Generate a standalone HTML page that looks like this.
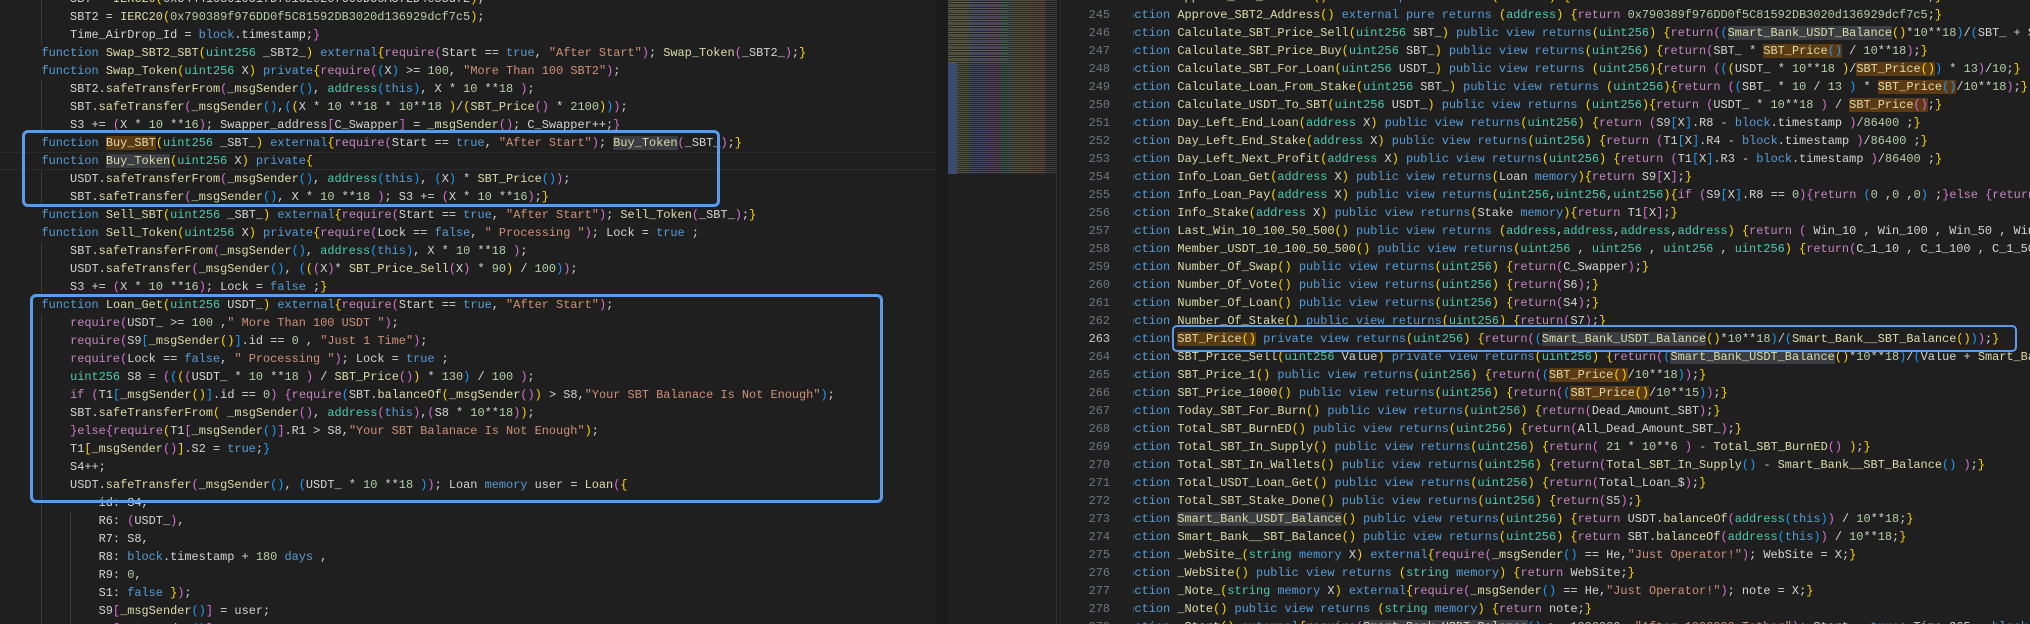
<!DOCTYPE html>
<html><head><meta charset="utf-8"><style>
html,body{margin:0;padding:0;background:#1f1f1f;width:2030px;height:624px;overflow:hidden;position:relative}
pre{margin:0;font-family:"Liberation Mono",monospace;font-size:11.92px;line-height:18px;color:#d4d4d4;position:absolute;white-space:pre}
.k{color:#569cd6}.f{color:#dcdcaa}.t{color:#4ec9b0}.c{color:#c586c0}.s{color:#ce9178}.n{color:#b5cea8}
.y{color:#ffd700}.m{color:#da70d6}.b{color:#179fff}
.h{background:#5c3a14}.g{background:#3a3d41}
#lp{position:absolute;left:0;top:0;width:936px;height:624px;overflow:hidden}
#rp{position:absolute;left:1133px;top:0;width:897px;height:624px;overflow:hidden}
.box{position:absolute;border:3px solid #5b9be8;border-radius:6px;box-sizing:border-box}
.guide{position:absolute;width:1px;background:#3c3c3c}
</style></head><body>
<div id="lp">
<div style="position:absolute;left:0;top:152px;width:936px;height:16px;border-top:1px solid #2c2c2c;border-bottom:1px solid #2c2c2c"></div>
<div class="guide" style="left:41px;top:-10px;height:54px"></div>
<div class="guide" style="left:41px;top:80px;height:54px"></div>
<div class="guide" style="left:41px;top:170px;height:36px"></div>
<div class="guide" style="left:41px;top:242px;height:54px"></div>
<div class="guide" style="left:41px;top:314px;height:310px"></div>
<div class="guide" style="left:70px;top:512px;height:112px"></div>
<pre style="left:12.9px;top:-10px">        SBT = <span class="f">IERC20</span><span class="y">(</span>0x5444103010517D7e152e207600D5cA572D4e53d72<span class="y">)</span>;
        SBT2 = <span class="f">IERC20</span><span class="y">(</span><span class="n">0x790389f976DD0f5C81592DB3020d136929dcf7c5</span><span class="y">)</span>;
        Time_AirDrop_Id = <span class="k">block</span>.timestamp;<span class="m">}</span>
    <span class="k">function</span> <span class="f">Swap_SBT2_SBT</span><span class="y">(</span><span class="t">uint256</span> _SBT2_<span class="y">)</span> <span class="k">external</span><span class="y">{</span><span class="c">require</span><span class="m">(</span>Start == <span class="k">true</span>, <span class="s">"After Start"</span><span class="m">)</span>; <span class="f">Swap_Token</span><span class="m">(</span>_SBT2_<span class="m">)</span>;<span class="y">}</span>
    <span class="k">function</span> <span class="f">Swap_Token</span><span class="y">(</span><span class="t">uint256</span> X<span class="y">)</span> <span class="k">private</span><span class="y">{</span><span class="c">require</span><span class="m">(</span><span class="b">(</span>X<span class="b">)</span> &gt;= <span class="n">100</span>, <span class="s">"More Than 100 SBT2"</span><span class="m">)</span>;
        SBT2.<span class="f">safeTransferFrom</span><span class="m">(</span><span class="f">_msgSender</span><span class="b">()</span>, <span class="t">address</span><span class="b">(</span><span class="k">this</span><span class="b">)</span>, X * <span class="n">10</span> **<span class="n">18</span> <span class="m">)</span>;
        SBT.<span class="f">safeTransfer</span><span class="m">(</span><span class="f">_msgSender</span><span class="b">()</span>,<span class="b">(</span><span class="y">(</span>X * <span class="n">10</span> **<span class="n">18</span> * <span class="n">10</span>**<span class="n">18</span> <span class="y">)</span>/<span class="y">(</span><span class="f">SBT_Price</span><span class="m">()</span> * <span class="n">2100</span><span class="y">)</span><span class="b">)</span><span class="m">)</span>;
        S3 += <span class="m">(</span>X * <span class="n">10</span> **<span class="n">16</span><span class="m">)</span>; Swapper_address<span class="m">[</span>C_Swapper<span class="m">]</span> = <span class="f">_msgSender</span><span class="m">()</span>; C_Swapper++;<span class="m">}</span>
    <span class="k">function</span> <span class="f h">Buy_SBT</span><span class="y">(</span><span class="t">uint256</span> _SBT_<span class="y">)</span> <span class="k">external</span><span class="y">{</span><span class="c">require</span><span class="m">(</span>Start == <span class="k">true</span>, <span class="s">"After Start"</span><span class="m">)</span>; <span class="f g">Buy_Token</span><span class="m">(</span>_SBT_<span class="m">)</span>;<span class="y">}</span>
    <span class="k">function</span> <span class="f g">Buy_Token</span><span class="y">(</span><span class="t">uint256</span> X<span class="y">)</span> <span class="k">private</span><span class="y">{</span>
        USDT.<span class="f">safeTransferFrom</span><span class="m">(</span><span class="f">_msgSender</span><span class="b">()</span>, <span class="t">address</span><span class="b">(</span><span class="k">this</span><span class="b">)</span>, <span class="b">(</span>X<span class="b">)</span> * <span class="f">SBT_Price</span><span class="b">()</span><span class="m">)</span>;
        SBT.<span class="f">safeTransfer</span><span class="m">(</span><span class="f">_msgSender</span><span class="b">()</span>, X * <span class="n">10</span> **<span class="n">18</span> <span class="m">)</span>; S3 += <span class="m">(</span>X * <span class="n">10</span> **<span class="n">16</span><span class="m">)</span>;<span class="y">}</span>
    <span class="k">function</span> <span class="f">Sell_SBT</span><span class="y">(</span><span class="t">uint256</span> _SBT_<span class="y">)</span> <span class="k">external</span><span class="y">{</span><span class="c">require</span><span class="m">(</span>Start == <span class="k">true</span>, <span class="s">"After Start"</span><span class="m">)</span>; <span class="f">Sell_Token</span><span class="m">(</span>_SBT_<span class="m">)</span>;<span class="y">}</span>
    <span class="k">function</span> <span class="f">Sell_Token</span><span class="y">(</span><span class="t">uint256</span> X<span class="y">)</span> <span class="k">private</span><span class="y">{</span><span class="c">require</span><span class="m">(</span>Lock == <span class="k">false</span>, <span class="s">" Processing "</span><span class="m">)</span>; Lock = <span class="k">true</span> ;
        SBT.<span class="f">safeTransferFrom</span><span class="m">(</span><span class="f">_msgSender</span><span class="b">()</span>, <span class="t">address</span><span class="b">(</span><span class="k">this</span><span class="b">)</span>, X * <span class="n">10</span> **<span class="n">18</span> <span class="m">)</span>;
        USDT.<span class="f">safeTransfer</span><span class="m">(</span><span class="f">_msgSender</span><span class="b">()</span>, <span class="b">(</span><span class="y">(</span><span class="m">(</span>X<span class="m">)</span>* <span class="f">SBT_Price_Sell</span><span class="m">(</span>X<span class="m">)</span> * <span class="n">90</span><span class="y">)</span> / <span class="n">100</span><span class="b">)</span><span class="m">)</span>;
        S3 += <span class="m">(</span>X * <span class="n">10</span> **<span class="n">16</span><span class="m">)</span>; Lock = <span class="k">false</span> ;<span class="y">}</span>
    <span class="k">function</span> <span class="f">Loan_Get</span><span class="y">(</span><span class="t">uint256</span> USDT_<span class="y">)</span> <span class="k">external</span><span class="y">{</span><span class="c">require</span><span class="m">(</span>Start == <span class="k">true</span>, <span class="s">"After Start"</span><span class="m">)</span>;
        <span class="c">require</span><span class="m">(</span>USDT_ &gt;= <span class="n">100</span> ,<span class="s">" More Than 100 USDT "</span><span class="m">)</span>;
        <span class="c">require</span><span class="m">(</span>S9<span class="b">[</span><span class="f">_msgSender</span><span class="y">()</span><span class="b">]</span>.id == <span class="n">0</span> , <span class="s">"Just 1 Time"</span><span class="m">)</span>;
        <span class="c">require</span><span class="m">(</span>Lock == <span class="k">false</span>, <span class="s">" Processing "</span><span class="m">)</span>; Lock = <span class="k">true</span> ;
        <span class="t">uint256</span> S8 = <span class="m">(</span><span class="b">(</span><span class="y">(</span><span class="m">(</span>USDT_ * <span class="n">10</span> **<span class="n">18</span> <span class="m">)</span> / <span class="f">SBT_Price</span><span class="m">()</span><span class="y">)</span> * <span class="n">130</span><span class="b">)</span> / <span class="n">100</span> <span class="m">)</span>;
        <span class="c">if</span> <span class="m">(</span>T1<span class="b">[</span><span class="f">_msgSender</span><span class="y">()</span><span class="b">]</span>.id == <span class="n">0</span><span class="m">)</span> <span class="m">{</span><span class="c">require</span><span class="b">(</span>SBT.<span class="f">balanceOf</span><span class="y">(</span><span class="f">_msgSender</span><span class="m">()</span><span class="y">)</span> &gt; S8,<span class="s">"Your SBT Balanace Is Not Enough"</span><span class="b">)</span>;
        SBT.<span class="f">safeTransferFrom</span><span class="y">(</span> <span class="f">_msgSender</span><span class="m">()</span>, <span class="t">address</span><span class="m">(</span><span class="k">this</span><span class="m">)</span>,<span class="m">(</span>S8 * <span class="n">10</span>**<span class="n">18</span><span class="m">)</span><span class="y">)</span>;
        <span class="m">}</span><span class="c">else</span><span class="m">{</span><span class="c">require</span><span class="y">(</span>T1<span class="m">[</span><span class="f">_msgSender</span><span class="b">()</span><span class="m">]</span>.R1 &gt; S8,<span class="s">"Your SBT Balanace Is Not Enough"</span><span class="y">)</span>;
        T1<span class="y">[</span><span class="f">_msgSender</span><span class="m">()</span><span class="y">]</span>.S2 = <span class="k">true</span>;<span class="b">}</span>
        S4++;
        USDT.<span class="f">safeTransfer</span><span class="m">(</span><span class="f">_msgSender</span><span class="b">()</span>, <span class="b">(</span>USDT_ * <span class="n">10</span> **<span class="n">18</span> <span class="b">)</span><span class="m">)</span>; Loan <span class="k">memory</span> user = <span class="f">Loan</span><span class="m">(</span><span class="y">{</span>
            id: S4,
            R6: <span class="m">(</span>USDT_<span class="m">)</span>,
            R7: S8,
            R8: <span class="k">block</span>.timestamp + <span class="n">180</span> <span class="k">days</span> ,
            R9: <span class="n">0</span>,
            S1: <span class="k">false</span> <span class="y">}</span><span class="m">)</span>;
            S9<span class="m">[</span><span class="f">_msgSender</span><span class="b">()</span><span class="m">]</span> = user;
            T1<span class="m">[</span><span class="f">_msgSender</span><span class="b">()</span><span class="m">]</span>.S2 = <span class="k">true</span>;</pre>
<div class="box" style="left:22px;top:130px;width:698px;height:77px"></div>
<div class="box" style="left:30px;top:294px;width:853px;height:209px"></div>
</div>
<div style="position:absolute;left:936px;top:0;width:12px;height:624px;background:#1b1b1b"></div>
<div style="position:absolute;left:948px;top:0;width:108px;height:174px;opacity:.55;background:
repeating-linear-gradient(0deg,rgba(0,0,0,.55) 0 1px,transparent 1px 2px),
linear-gradient(90deg,#7d7a55 0 20%,#5d6a9a 20% 35%,#7b5c86 35% 48%,#587f6e 48% 60%,#7d7a55 60% 75%,#8a6a55 75% 90%,#555 90%);"></div>
<div style="position:absolute;left:948px;top:0;width:60px;height:63px;opacity:.5;background:repeating-linear-gradient(0deg,#6b6a58 0 1px,transparent 1px 3px)"></div>
<div style="position:absolute;left:948px;top:63px;width:9px;height:111px;background:#3a4c6e"></div>
<div style="position:absolute;left:1056px;top:0;width:1px;height:624px;background:#333"></div>
<div style="position:absolute;left:1060px;top:0;width:1px;height:624px;background:#2a2a2a"></div>
<pre style="left:1060px;top:-12px;width:50px;text-align:right;color:#6e7681">244
245
246
247
248
249
250
251
252
253
254
255
256
257
258
259
260
261
262
<span style="color:#cccccc">263</span>
264
265
266
267
268
269
270
271
272
273
274
275
276
277
278
279</pre>
<div id="rp">
<pre style="left:-20px;top:-12px"><span class="k">function</span> <span class="f">Approve_SBT_Address</span><span class="y">()</span> <span class="k">external</span> <span class="k">pure</span> <span class="k">returns</span> <span class="y">(</span><span class="t">address</span><span class="y">)</span> <span class="y">{</span><span class="c">return</span> <span class="n">0x5444103010517D7e152e207600D5cA572D4e53d72</span>;<span class="y">}</span>
<span class="k">function</span> <span class="f">Approve_SBT2_Address</span><span class="y">()</span> <span class="k">external</span> <span class="k">pure</span> <span class="k">returns</span> <span class="y">(</span><span class="t">address</span><span class="y">)</span> <span class="y">{</span><span class="c">return</span> <span class="n">0x790389f976DD0f5C81592DB3020d136929dcf7c5</span>;<span class="y">}</span>
<span class="k">function</span> <span class="f">Calculate_SBT_Price_Sell</span><span class="y">(</span><span class="t">uint256</span> SBT_<span class="y">)</span> <span class="k">public</span> <span class="k">view</span> <span class="k">returns</span><span class="y">(</span><span class="t">uint256</span><span class="y">)</span> <span class="y">{</span><span class="c">return</span><span class="m">(</span><span class="b">(</span><span class="f g">Smart_Bank_USDT_Balance</span><span class="y">()</span>*<span class="n">10</span>**<span class="n">18</span><span class="b">)</span>/<span class="b">(</span>SBT_ + <span class="f">Smart_Bank__SBT_Balance</span><span class="y">()</span><span class="b">)</span><span class="m">)</span>;<span class="y">}</span>
<span class="k">function</span> <span class="f">Calculate_SBT_Price_Buy</span><span class="y">(</span><span class="t">uint256</span> SBT_<span class="y">)</span> <span class="k">public</span> <span class="k">view</span> <span class="k">returns</span><span class="y">(</span><span class="t">uint256</span><span class="y">)</span> <span class="y">{</span><span class="c">return</span><span class="m">(</span>SBT_ * <span class="f h">SBT_Price</span><span class="h"><span class="b">()</span></span> / <span class="n">10</span>**<span class="n">18</span><span class="m">)</span>;<span class="y">}</span>
<span class="k">function</span> <span class="f">Calculate_SBT_For_Loan</span><span class="y">(</span><span class="t">uint256</span> USDT_<span class="y">)</span> <span class="k">public</span> <span class="k">view</span> <span class="k">returns</span> <span class="y">(</span><span class="t">uint256</span><span class="y">)</span><span class="y">{</span><span class="c">return</span> <span class="m">(</span><span class="b">(</span><span class="y">(</span>USDT_ * <span class="n">10</span>**<span class="n">18</span> <span class="y">)</span>/<span class="f h">SBT_Price</span><span class="h"><span class="y">()</span></span><span class="b">)</span> * <span class="n">13</span><span class="m">)</span>/<span class="n">10</span>;<span class="y">}</span>
<span class="k">function</span> <span class="f">Calculate_Loan_From_Stake</span><span class="y">(</span><span class="t">uint256</span> SBT_<span class="y">)</span> <span class="k">public</span> <span class="k">view</span> <span class="k">returns</span> <span class="y">(</span><span class="t">uint256</span><span class="y">)</span><span class="y">{</span><span class="c">return</span> <span class="m">(</span><span class="b">(</span>SBT_ * <span class="n">10</span> / <span class="n">13</span> <span class="b">)</span> * <span class="f h">SBT_Price</span><span class="h"><span class="b">()</span></span>/<span class="n">10</span>**<span class="n">18</span><span class="m">)</span>;<span class="y">}</span>
<span class="k">function</span> <span class="f">Calculate_USDT_To_SBT</span><span class="y">(</span><span class="t">uint256</span> USDT_<span class="y">)</span> <span class="k">public</span> <span class="k">view</span> <span class="k">returns</span> <span class="y">(</span><span class="t">uint256</span><span class="y">)</span><span class="y">{</span><span class="c">return</span> <span class="m">(</span>USDT_ * <span class="n">10</span>**<span class="n">18</span> <span class="m">)</span> / <span class="f h">SBT_Price</span><span class="h"><span class="m">()</span></span>;<span class="y">}</span>
<span class="k">function</span> <span class="f">Day_Left_End_Loan</span><span class="y">(</span><span class="t">address</span> X<span class="y">)</span> <span class="k">public</span> <span class="k">view</span> <span class="k">returns</span><span class="y">(</span><span class="t">uint256</span><span class="y">)</span> <span class="y">{</span><span class="c">return</span> <span class="m">(</span>S9<span class="b">[</span>X<span class="b">]</span>.R8 - <span class="k">block</span>.timestamp <span class="m">)</span>/<span class="n">86400</span> ;<span class="y">}</span>
<span class="k">function</span> <span class="f">Day_Left_End_Stake</span><span class="y">(</span><span class="t">address</span> X<span class="y">)</span> <span class="k">public</span> <span class="k">view</span> <span class="k">returns</span><span class="y">(</span><span class="t">uint256</span><span class="y">)</span> <span class="y">{</span><span class="c">return</span> <span class="m">(</span>T1<span class="b">[</span>X<span class="b">]</span>.R4 - <span class="k">block</span>.timestamp <span class="m">)</span>/<span class="n">86400</span> ;<span class="y">}</span>
<span class="k">function</span> <span class="f">Day_Left_Next_Profit</span><span class="y">(</span><span class="t">address</span> X<span class="y">)</span> <span class="k">public</span> <span class="k">view</span> <span class="k">returns</span><span class="y">(</span><span class="t">uint256</span><span class="y">)</span> <span class="y">{</span><span class="c">return</span> <span class="m">(</span>T1<span class="b">[</span>X<span class="b">]</span>.R3 - <span class="k">block</span>.timestamp <span class="m">)</span>/<span class="n">86400</span> ;<span class="y">}</span>
<span class="k">function</span> <span class="f">Info_Loan_Get</span><span class="y">(</span><span class="t">address</span> X<span class="y">)</span> <span class="k">public</span> <span class="k">view</span> <span class="k">returns</span><span class="y">(</span>Loan <span class="k">memory</span><span class="y">)</span><span class="y">{</span><span class="c">return</span> S9<span class="m">[</span>X<span class="m">]</span>;<span class="y">}</span>
<span class="k">function</span> <span class="f">Info_Loan_Pay</span><span class="y">(</span><span class="t">address</span> X<span class="y">)</span> <span class="k">public</span> <span class="k">view</span> <span class="k">returns</span><span class="y">(</span><span class="t">uint256</span>,<span class="t">uint256</span>,<span class="t">uint256</span><span class="y">)</span><span class="y">{</span><span class="c">if</span> <span class="m">(</span>S9<span class="b">[</span>X<span class="b">]</span>.R8 == <span class="n">0</span><span class="m">)</span><span class="m">{</span><span class="c">return</span> <span class="b">(</span><span class="n">0</span> ,<span class="n">0</span> ,<span class="n">0</span><span class="b">)</span> ;<span class="m">}</span><span class="c">else</span> <span class="m">{</span><span class="c">return</span> <span class="b">(</span>S9<span class="y">[</span>X<span class="y">]</span>.R6 , S9<span class="y">[</span>X<span class="y">]</span>.R7<span class="b">)</span>;<span class="m">}</span><span class="y">}</span>
<span class="k">function</span> <span class="f">Info_Stake</span><span class="y">(</span><span class="t">address</span> X<span class="y">)</span> <span class="k">public</span> <span class="k">view</span> <span class="k">returns</span><span class="y">(</span>Stake <span class="k">memory</span><span class="y">)</span><span class="y">{</span><span class="c">return</span> T1<span class="m">[</span>X<span class="m">]</span>;<span class="y">}</span>
<span class="k">function</span> <span class="f">Last_Win_10_100_50_500</span><span class="y">()</span> <span class="k">public</span> <span class="k">view</span> <span class="k">returns</span> <span class="y">(</span><span class="t">address</span>,<span class="t">address</span>,<span class="t">address</span>,<span class="t">address</span><span class="y">)</span> <span class="y">{</span><span class="c">return</span> <span class="m">(</span> Win_10 , Win_100 , Win_50 , Win_500 <span class="m">)</span>;<span class="y">}</span>
<span class="k">function</span> <span class="f">Member_USDT_10_100_50_500</span><span class="y">()</span> <span class="k">public</span> <span class="k">view</span> <span class="k">returns</span><span class="y">(</span><span class="t">uint256</span> , <span class="t">uint256</span> , <span class="t">uint256</span> , <span class="t">uint256</span><span class="y">)</span> <span class="y">{</span><span class="c">return</span><span class="m">(</span>C_1_10 , C_1_100 , C_1_50 , C_1_500<span class="m">)</span>;<span class="y">}</span>
<span class="k">function</span> <span class="f">Number_Of_Swap</span><span class="y">()</span> <span class="k">public</span> <span class="k">view</span> <span class="k">returns</span><span class="y">(</span><span class="t">uint256</span><span class="y">)</span> <span class="y">{</span><span class="c">return</span><span class="m">(</span>C_Swapper<span class="m">)</span>;<span class="y">}</span>
<span class="k">function</span> <span class="f">Number_Of_Vote</span><span class="y">()</span> <span class="k">public</span> <span class="k">view</span> <span class="k">returns</span><span class="y">(</span><span class="t">uint256</span><span class="y">)</span> <span class="y">{</span><span class="c">return</span><span class="m">(</span>S6<span class="m">)</span>;<span class="y">}</span>
<span class="k">function</span> <span class="f">Number_Of_Loan</span><span class="y">()</span> <span class="k">public</span> <span class="k">view</span> <span class="k">returns</span><span class="y">(</span><span class="t">uint256</span><span class="y">)</span> <span class="y">{</span><span class="c">return</span><span class="m">(</span>S4<span class="m">)</span>;<span class="y">}</span>
<span class="k">function</span> <span class="f">Number_Of_Stake</span><span class="y">()</span> <span class="k">public</span> <span class="k">view</span> <span class="k">returns</span><span class="y">(</span><span class="t">uint256</span><span class="y">)</span> <span class="y">{</span><span class="c">return</span><span class="m">(</span>S7<span class="m">)</span>;<span class="y">}</span>
<span class="k">function</span> <span class="f h">SBT_Price</span><span class="h"><span class="y">()</span></span> <span class="k">private</span> <span class="k">view</span> <span class="k">returns</span><span class="y">(</span><span class="t">uint256</span><span class="y">)</span> <span class="y">{</span><span class="c">return</span><span class="m">(</span><span class="b">(</span><span class="f g">Smart_Bank_USDT_Balance</span><span class="y">()</span>*<span class="n">10</span>**<span class="n">18</span><span class="b">)</span>/<span class="b">(</span><span class="f">Smart_Bank__SBT_Balance</span><span class="y">()</span><span class="b">)</span><span class="m">)</span>;<span class="y">}</span>
<span class="k">function</span> <span class="f">SBT_Price_Sell</span><span class="y">(</span><span class="t">uint256</span> Value<span class="y">)</span> <span class="k">private</span> <span class="k">view</span> <span class="k">returns</span><span class="y">(</span><span class="t">uint256</span><span class="y">)</span> <span class="y">{</span><span class="c">return</span><span class="m">(</span><span class="b">(</span><span class="f g">Smart_Bank_USDT_Balance</span><span class="y">()</span>*<span class="n">10</span>**<span class="n">18</span><span class="b">)</span>/<span class="b">(</span>Value + <span class="f">Smart_Bank__SBT_Balance</span><span class="y">()</span><span class="b">)</span><span class="m">)</span>;<span class="y">}</span>
<span class="k">function</span> <span class="f">SBT_Price_1</span><span class="y">()</span> <span class="k">public</span> <span class="k">view</span> <span class="k">returns</span><span class="y">(</span><span class="t">uint256</span><span class="y">)</span> <span class="y">{</span><span class="c">return</span><span class="m">(</span><span class="b">(</span><span class="f h">SBT_Price</span><span class="h"><span class="y">()</span></span>/<span class="n">10</span>**<span class="n">18</span><span class="b">)</span><span class="m">)</span>;<span class="y">}</span>
<span class="k">function</span> <span class="f">SBT_Price_1000</span><span class="y">()</span> <span class="k">public</span> <span class="k">view</span> <span class="k">returns</span><span class="y">(</span><span class="t">uint256</span><span class="y">)</span> <span class="y">{</span><span class="c">return</span><span class="m">(</span><span class="b">(</span><span class="f h">SBT_Price</span><span class="h"><span class="y">()</span></span>/<span class="n">10</span>**<span class="n">15</span><span class="b">)</span><span class="m">)</span>;<span class="y">}</span>
<span class="k">function</span> <span class="f">Today_SBT_For_Burn</span><span class="y">()</span> <span class="k">public</span> <span class="k">view</span> <span class="k">returns</span><span class="y">(</span><span class="t">uint256</span><span class="y">)</span> <span class="y">{</span><span class="c">return</span><span class="m">(</span>Dead_Amount_SBT<span class="m">)</span>;<span class="y">}</span>
<span class="k">function</span> <span class="f">Total_SBT_BurnED</span><span class="y">()</span> <span class="k">public</span> <span class="k">view</span> <span class="k">returns</span><span class="y">(</span><span class="t">uint256</span><span class="y">)</span> <span class="y">{</span><span class="c">return</span><span class="m">(</span>All_Dead_Amount_SBT_<span class="m">)</span>;<span class="y">}</span>
<span class="k">function</span> <span class="f">Total_SBT_In_Supply</span><span class="y">()</span> <span class="k">public</span> <span class="k">view</span> <span class="k">returns</span><span class="y">(</span><span class="t">uint256</span><span class="y">)</span> <span class="y">{</span><span class="c">return</span><span class="m">(</span> <span class="n">21</span> * <span class="n">10</span>**<span class="n">6</span> <span class="m">)</span> - <span class="f">Total_SBT_BurnED</span><span class="m">()</span> <span class="y">)</span>;<span class="y">}</span>
<span class="k">function</span> <span class="f">Total_SBT_In_Wallets</span><span class="y">()</span> <span class="k">public</span> <span class="k">view</span> <span class="k">returns</span><span class="y">(</span><span class="t">uint256</span><span class="y">)</span> <span class="y">{</span><span class="c">return</span><span class="m">(</span><span class="f">Total_SBT_In_Supply</span><span class="b">()</span> - <span class="f">Smart_Bank__SBT_Balance</span><span class="b">()</span> <span class="m">)</span>;<span class="y">}</span>
<span class="k">function</span> <span class="f">Total_USDT_Loan_Get</span><span class="y">()</span> <span class="k">public</span> <span class="k">view</span> <span class="k">returns</span><span class="y">(</span><span class="t">uint256</span><span class="y">)</span> <span class="y">{</span><span class="c">return</span><span class="m">(</span>Total_Loan_$<span class="m">)</span>;<span class="y">}</span>
<span class="k">function</span> <span class="f">Total_SBT_Stake_Done</span><span class="y">()</span> <span class="k">public</span> <span class="k">view</span> <span class="k">returns</span><span class="y">(</span><span class="t">uint256</span><span class="y">)</span> <span class="y">{</span><span class="c">return</span><span class="m">(</span>S5<span class="m">)</span>;<span class="y">}</span>
<span class="k">function</span> <span class="f g">Smart_Bank_USDT_Balance</span><span class="y">()</span> <span class="k">public</span> <span class="k">view</span> <span class="k">returns</span><span class="y">(</span><span class="t">uint256</span><span class="y">)</span> <span class="y">{</span><span class="c">return</span> USDT.<span class="f">balanceOf</span><span class="m">(</span><span class="t">address</span><span class="b">(</span><span class="k">this</span><span class="b">)</span><span class="m">)</span> / <span class="n">10</span>**<span class="n">18</span>;<span class="y">}</span>
<span class="k">function</span> <span class="f">Smart_Bank__SBT_Balance</span><span class="y">()</span> <span class="k">public</span> <span class="k">view</span> <span class="k">returns</span><span class="y">(</span><span class="t">uint256</span><span class="y">)</span> <span class="y">{</span><span class="c">return</span> SBT.<span class="f">balanceOf</span><span class="m">(</span><span class="t">address</span><span class="b">(</span><span class="k">this</span><span class="b">)</span><span class="m">)</span> / <span class="n">10</span>**<span class="n">18</span>;<span class="y">}</span>
<span class="k">function</span> <span class="f">_WebSite_</span><span class="y">(</span><span class="t">string</span> <span class="k">memory</span> X<span class="y">)</span> <span class="k">external</span><span class="y">{</span><span class="c">require</span><span class="m">(</span><span class="f">_msgSender</span><span class="b">()</span> == He,<span class="s">"Just Operator!"</span><span class="m">)</span>; WebSite = X;<span class="y">}</span>
<span class="k">function</span> <span class="f">_WebSite</span><span class="y">()</span> <span class="k">public</span> <span class="k">view</span> <span class="k">returns</span> <span class="y">(</span><span class="t">string</span> <span class="k">memory</span><span class="y">)</span> <span class="y">{</span><span class="c">return</span> WebSite;<span class="y">}</span>
<span class="k">function</span> <span class="f">_Note_</span><span class="y">(</span><span class="t">string</span> <span class="k">memory</span> X<span class="y">)</span> <span class="k">external</span><span class="y">{</span><span class="c">require</span><span class="m">(</span><span class="f">_msgSender</span><span class="b">()</span> == He,<span class="s">"Just Operator!"</span><span class="m">)</span>; note = X;<span class="y">}</span>
<span class="k">function</span> <span class="f">_Note</span><span class="y">()</span> <span class="k">public</span> <span class="k">view</span> <span class="k">returns</span> <span class="y">(</span><span class="t">string</span> <span class="k">memory</span><span class="y">)</span> <span class="y">{</span><span class="c">return</span> note;<span class="y">}</span>
<span class="k">function</span> <span class="f">_Start</span><span class="y">()</span> <span class="k">external</span><span class="y">{</span><span class="c">require</span><span class="m">(</span><span class="f g">Smart_Bank_USDT_Balance</span><span class="b">()</span> &gt;= <span class="n">1000000</span>, <span class="s">"After 1000000 Tether"</span><span class="m">)</span>; Start = <span class="k">true</span>; Time_365 = <span class="k">block</span>.timestamp;<span class="y">}</span></pre>
</div>
<div class="box" style="left:1172px;top:325px;width:845px;height:27px;border-width:2px;border-radius:5px"></div>
</body></html>
